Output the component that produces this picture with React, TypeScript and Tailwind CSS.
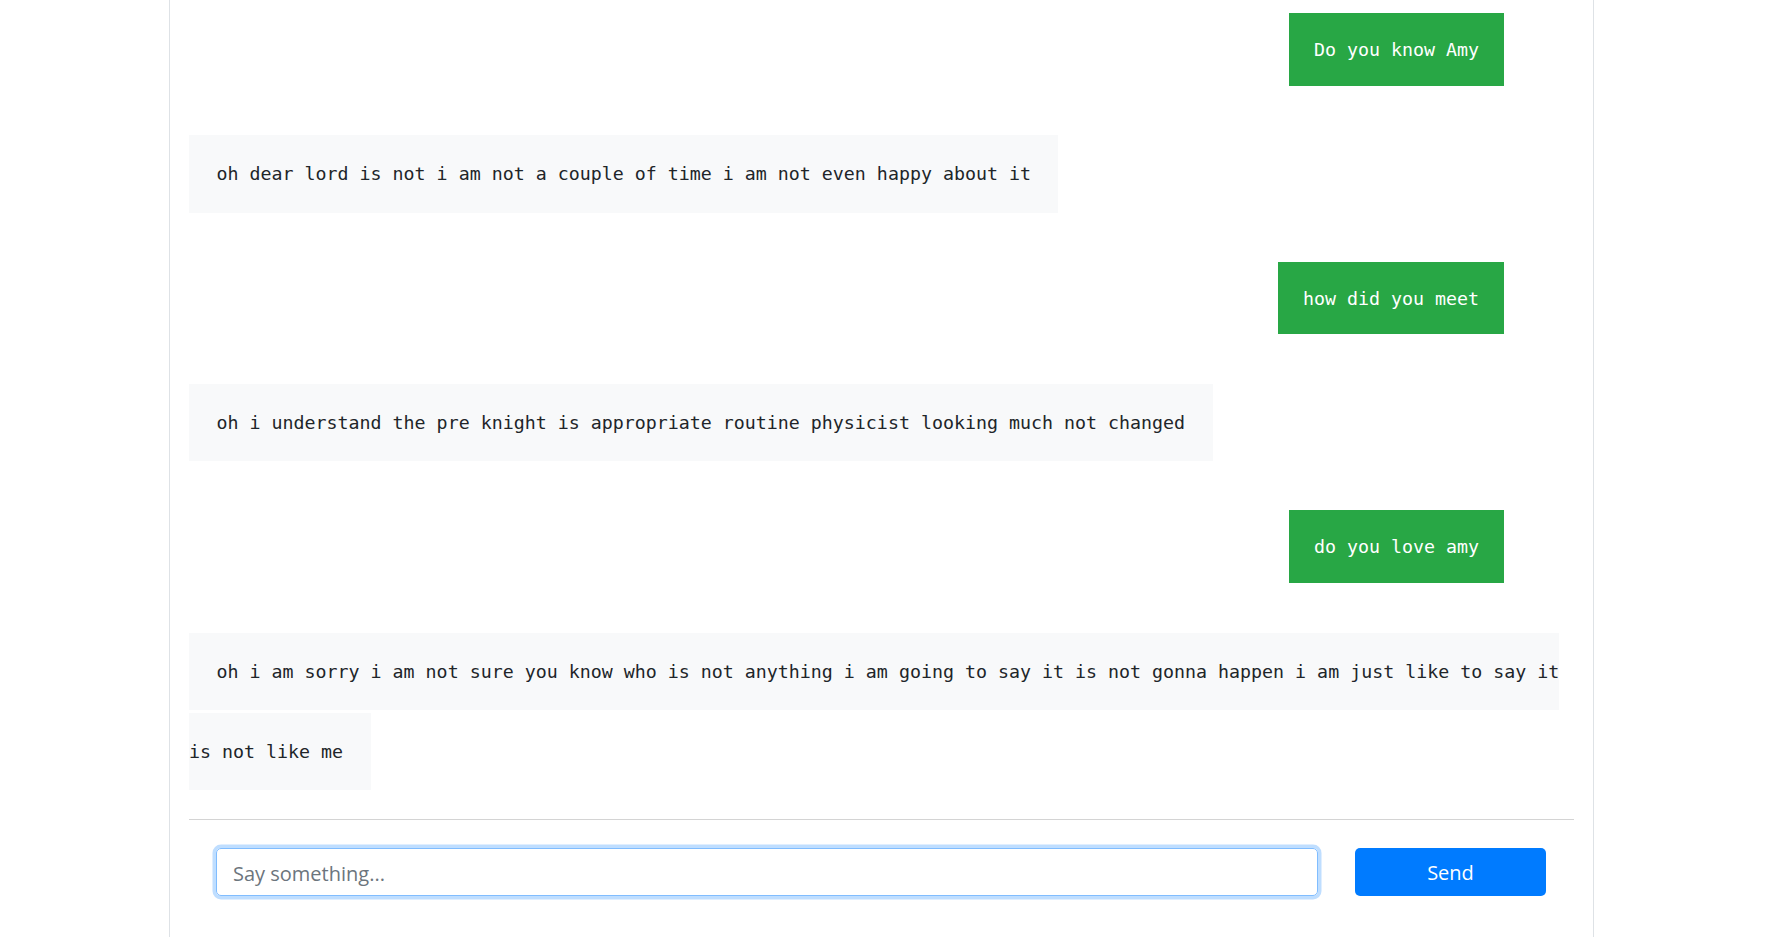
import React from 'react';

type Msg = { from: 'me' | 'bot'; text: string };

const messages: Msg[] = [
  { from: 'me', text: 'Do you know Amy' },
  { from: 'bot', text: 'oh dear lord is not i am not a couple of time i am not even happy about it' },
  { from: 'me', text: 'how did you meet' },
  { from: 'bot', text: 'oh i understand the pre knight is appropriate routine physicist looking much not changed' },
  { from: 'me', text: 'do you love amy' },
  {
    from: 'bot',
    text: 'oh i am sorry i am not sure you know who is not anything i am going to say it is not gonna happen i am just like to say it is not like me',
  },
];

const mono = "font-['DejaVu_Sans_Mono','Liberation_Mono',monospace] text-[18.3px]";

const App: React.FC = () => {
  return (
    <div className="min-h-screen bg-white pr-[2px]">
      <div className="mx-auto w-[1425px] min-h-screen border-x border-[#dee2e6] pl-[19px] pr-[19px] pt-[13px]">
        {/* Chat log */}
        <div className="flex flex-col gap-12">
          {messages.map((m, i) =>
            m.from === 'me' ? (
              <div key={i} className="flex justify-end pr-[70px]">
                <span
                  className={`${mono} inline-block bg-[#28a745] text-white px-[25px] pt-[26px] pb-[24px] leading-[22.7px] whitespace-pre`}
                >
                  {m.text}
                </span>
              </div>
            ) : (
              <div key={i} className="leading-[80px]">
                <span className={`${mono} bg-[#f8f9fa] text-[#212529] px-[27.5px] pt-[27.5px] pb-[29px]`}>
                  {m.text}
                </span>
              </div>
            )
          )}
        </div>

        <hr className="mt-[28px] border-0 border-t border-[#d4d4d4]" />

        {/* Composer */}
        <div className="flex items-center pl-[27px] pr-[28px] pt-[28px]">
          <input
            autoFocus
            type="text"
            placeholder="Say something..."
            className="w-[1102px] h-[48px] px-4 pt-[2px] text-[20px] font-['Open_Sans','Noto_Sans',sans-serif] text-[#495057] placeholder:text-[#6c757d] border border-[#80bdff] rounded-[5px] outline-none shadow-[0_0_0_3.5px_rgba(0,123,255,0.25)]"
          />
          <button className="ml-[37px] w-[191px] h-[48px] pt-[2px] rounded-[5px] bg-[#007bff] text-white text-[20px] font-['Open_Sans','Noto_Sans',sans-serif]">
            Send
          </button>
        </div>
      </div>
    </div>
  );
};

export default App;
